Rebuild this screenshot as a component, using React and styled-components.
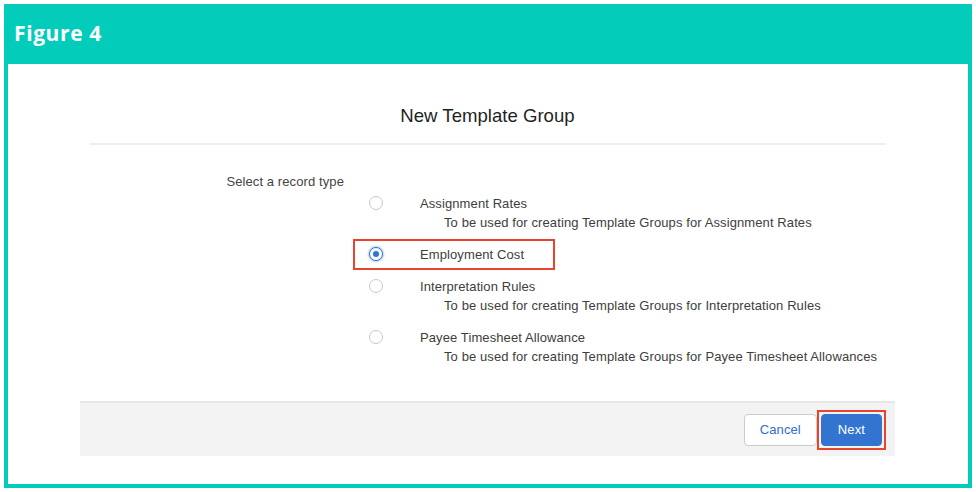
import React, { useState } from "react";
import styled, { createGlobalStyle } from "styled-components";

const GlobalStyle = createGlobalStyle`
  html, body {
    margin: 0;
    padding: 0;
    background: #ffffff;
  }
  body {
    font-family: "Liberation Sans", Arial, sans-serif;
  }
`;

const Frame = styled.div`
  margin: 4px;
  height: 484px;
  box-sizing: border-box;
  background: #03ccbb;
  padding: 0 4px 4px 4px;
  display: flex;
  flex-direction: column;
`;

const FigureBar = styled.div`
  height: 60px;
  flex: none;
  display: flex;
  align-items: center;
  padding-left: 6px;
  padding-bottom: 2px;
  box-sizing: border-box;
  color: #ffffff;
  font-family: "Open Sans", "Liberation Sans", sans-serif;
  font-weight: 700;
  font-size: 21px;
  letter-spacing: 0.6px;
`;

const Content = styled.div`
  flex: 1;
  background: #ffffff;
  padding: 0 73px 0 72px;
`;

const Panel = styled.div`
  display: flex;
  flex-direction: column;
`;

const PanelHeader = styled.div`
  margin: 0 10px;
  padding: 40px 0 15px;
  border-bottom: 2px solid #efefef;
  text-align: center;
  font-size: 18.6px;
  line-height: 24px;
  color: #1f1f1f;
`;

const Body = styled.div`
  padding: 27px 0 35px;
  font-size: 13px;
  letter-spacing: 0.1px;
  color: #3e3e3c;
`;

const Legend = styled.div`
  width: 264px;
  text-align: right;
  line-height: 20px;
  color: #444444;
  margin-bottom: 1px;
`;

const OptionList = styled.div`
  margin-left: 289px;
  display: flex;
  flex-direction: column;
  gap: 12px;
`;

const Option = styled.label`
  display: flex;
  flex-direction: column;
  cursor: pointer;
`;

const OptionHead = styled.div`
  position: relative;
  display: flex;
  align-items: center;
  height: 20px;

  ${(p) =>
    p.$highlight &&
    `
    &::after {
      content: "";
      position: absolute;
      left: -16px;
      top: -5px;
      width: 202px;
      height: 31px;
      border: 2px solid #e6442d;
      box-sizing: border-box;
      pointer-events: none;
    }
  `}
`;

const Radio = styled.span`
  width: 14px;
  height: 14px;
  box-sizing: border-box;
  border-radius: 50%;
  flex: none;
  background: #ffffff;
  border: 1px solid ${(p) => (p.$checked ? "#2f74d0" : "#c9c9c9")};
  box-shadow: ${(p) => (p.$checked ? "0 0 3px #5b9ae8" : "none")};
  display: flex;
  align-items: center;
  justify-content: center;
  margin-right: 37px;

  &::before {
    content: "";
    width: 6px;
    height: 6px;
    border-radius: 50%;
    background: ${(p) => (p.$checked ? "#2f74d0" : "transparent")};
  }
`;

const OptionLabel = styled.span``;

const OptionDesc = styled.div`
  margin-left: 75px;
  line-height: 19px;
`;

const Footer = styled.div`
  height: 55px;
  box-sizing: border-box;
  background: #f3f3f3;
  border-top: 2px solid #e7e7e7;
  padding: 0 9px 0 13px;
  display: flex;
  align-items: center;
  justify-content: flex-end;
`;

const Callout = styled.span`
  display: flex;
  padding: 2px;
  border: 2px solid #e6442d;
`;

const Button = styled.button`
  height: 32px;
  padding: 0 ${(p) => (p.$primary ? "16px" : "15px")};
  border-radius: 4px;
  font-family: "Liberation Sans", Arial, sans-serif;
  font-size: 13px;
  letter-spacing: 0.1px;
  cursor: pointer;
  border: 1px solid ${(p) => (p.$primary ? "#3274d0" : "#cccccc")};
  background: ${(p) => (p.$primary ? "#3274d0" : "#ffffff")};
  color: ${(p) => (p.$primary ? "#ffffff" : "#2f6fcc")};
`;

const recordTypes = [
  {
    id: "assignment",
    name: "Assignment Rates",
    desc: "To be used for creating Template Groups for Assignment Rates",
  },
  { id: "employment", name: "Employment Cost" },
  {
    id: "interpretation",
    name: "Interpretation Rules",
    desc: "To be used for creating Template Groups for Interpretation Rules",
  },
  {
    id: "payee",
    name: "Payee Timesheet Allowance",
    desc: "To be used for creating Template Groups for Payee Timesheet Allowances",
  },
];

const App = () => {
  const [selected, setSelected] = useState("employment");

  return (
    <>
      <GlobalStyle />
      <Frame>
        <FigureBar>Figure 4</FigureBar>
        <Content>
          <Panel>
            <PanelHeader>New Template Group</PanelHeader>
            <Body>
              <Legend>Select a record type</Legend>
              <OptionList>
                {recordTypes.map((type) => (
                  <Option key={type.id} onClick={() => setSelected(type.id)}>
                    <OptionHead $highlight={type.id === "employment"}>
                      <Radio $checked={selected === type.id} />
                      <OptionLabel>{type.name}</OptionLabel>
                    </OptionHead>
                    {type.desc && <OptionDesc>{type.desc}</OptionDesc>}
                  </Option>
                ))}
              </OptionList>
            </Body>
            <Footer>
              <Button>Cancel</Button>
              <Callout>
                <Button $primary>Next</Button>
              </Callout>
            </Footer>
          </Panel>
        </Content>
      </Frame>
    </>
  );
};

export default App;
